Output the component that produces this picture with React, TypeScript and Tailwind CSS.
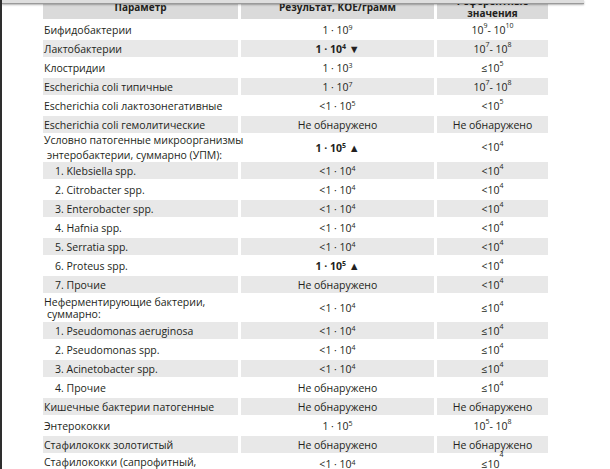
import type { ReactNode } from 'react';

type Row = {
  param: ReactNode;
  result: ReactNode;
  norm: ReactNode;
  gray?: boolean;
  sub?: boolean;
  tall?: string;
  top?: boolean;
};

// 10 with exponent
function P({ e }: { e: string }) {
  return (
    <>
      10<sup className="text-[7px]">{e}</sup>
    </>
  );
}

function Val({ lt, e }: { lt?: boolean; e: string }) {
  return (
    <span>
      {lt ? '<' : ''}1 · <P e={e} />
    </span>
  );
}

function Up({ e, down }: { e: string; down?: boolean }) {
  return (
    <span className="font-bold">
      1 · <P e={e} /> <span className="text-[11px]">{down ? '▼' : '▲'}</span>
    </span>
  );
}

const ND = 'Не обнаружено';

const rows: Row[] = [
  { param: 'Бифидобактерии', result: <Val e="9" />, norm: <><P e="9" /> - <P e="10" /></> },
  { param: 'Лактобактерии', result: <Up e="4" down />, norm: <><P e="7" /> - <P e="8" /></>, gray: true },
  { param: 'Клостридии', result: <Val e="3" />, norm: <>≤<P e="5" /></> },
  { param: 'Escherichia coli типичные', result: <Val e="7" />, norm: <><P e="7" /> - <P e="8" /></>, gray: true },
  { param: 'Escherichia coli лактозонегативные', result: <Val lt e="5" />, norm: <>&lt;<P e="5" /></> },
  { param: 'Escherichia coli гемолитические', result: ND, norm: ND, gray: true },
  {
    param: (
      <>
        Условно патогенные микроорганизмы
        <br />
        <span className="pl-[3px]">энтеробактерии, суммарно (УПМ):</span>
      </>
    ),
    result: <Up e="5" />,
    norm: <>&lt;<P e="4" /></>,
    tall: 'leading-[15px]',
  },
  { param: '1. Klebsiella spp.', result: <Val lt e="4" />, norm: <>&lt;<P e="4" /></>, gray: true, sub: true },
  { param: '2. Citrobacter spp.', result: <Val lt e="4" />, norm: <>&lt;<P e="4" /></>, sub: true },
  { param: '3. Enterobacter spp.', result: <Val lt e="4" />, norm: <>&lt;<P e="4" /></>, gray: true, sub: true },
  { param: '4. Hafnia spp.', result: <Val lt e="4" />, norm: <>&lt;<P e="4" /></>, sub: true },
  { param: '5. Serratia spp.', result: <Val lt e="4" />, norm: <>&lt;<P e="4" /></>, gray: true, sub: true },
  { param: '6. Proteus spp.', result: <Up e="5" />, norm: <>&lt;<P e="4" /></>, sub: true },
  { param: '7. Прочие', result: ND, norm: <>&lt;<P e="4" /></>, gray: true, sub: true },
  {
    param: (
      <>
        Неферментирующие бактерии,
        <br />
        <span className="pl-[3px]">суммарно:</span>
      </>
    ),
    result: <Val lt e="4" />,
    norm: <>≤<P e="4" /></>,
    tall: 'leading-[12px]',
  },
  { param: '1. Pseudomonas aeruginosa', result: <Val lt e="4" />, norm: <>≤<P e="4" /></>, gray: true, sub: true },
  { param: '2. Pseudomonas spp.', result: <Val lt e="4" />, norm: <>≤<P e="4" /></>, sub: true },
  { param: '3. Acinetobacter spp.', result: <Val lt e="4" />, norm: <>≤<P e="4" /></>, gray: true, sub: true },
  { param: '4. Прочие', result: ND, norm: <>≤<P e="4" /></>, sub: true },
  { param: 'Кишечные бактерии патогенные', result: ND, norm: ND, gray: true },
  { param: 'Энтерококки', result: <Val e="5" />, norm: <><P e="5" /> - <P e="8" /></> },
  { param: 'Стафилококк золотистый', result: ND, norm: ND, gray: true },
  {
    param: (
      <>
        Стафилококки (сапрофитный,
        <br />
        эпидермальный)
      </>
    ),
    result: <Val lt e="4" />,
    norm: <>≤<P e="4" /></>,
    tall: 'leading-[13px]',
    top: true,
  },
];

export default function App() {
  return (
    <div className="relative h-[469px] w-[610px] overflow-hidden border-l-[2px] border-[#2e2e2e] bg-white font-['Open_Sans',sans-serif] text-[10.5px] leading-[12px] text-[#231f20]">
      {/* page edge over the header */}
      <div className="absolute left-0 top-0 h-[4px] w-[582px] border-b border-[#9a9a9a] bg-[#dedede] shadow-[0_1px_2px_rgba(0,0,0,0.3)]" />

      <div className="-mt-[6px] ml-[41px] grid grid-cols-[195px_193px_111px] gap-x-[3px] gap-y-[2px]">
        <div className="flex h-[25px] items-center justify-center bg-[#dadada] text-[10px] font-bold">Параметр</div>
        <div className="flex h-[25px] items-center justify-center bg-[#dadada] text-[10px] font-bold">Результат, КОЕ/грамм</div>
        <div className="flex h-[25px] items-center justify-center bg-[#dadada] text-center text-[10px] font-bold">
          Референтные
          <br />
          значения
        </div>

        {rows.map((r, i) => {
          const bg = r.gray ? 'bg-[#e8e8e8]' : '';
          const h = r.tall ? `h-[25px] ${r.tall}` : 'h-[17px]';
          const al = r.top ? 'items-start pt-[3px]' : 'items-center';
          return (
            <div key={i} className="contents">
              <div className={`flex ${h} ${r.top ? 'items-start pt-[1px]' : 'items-center'} ${bg} ${r.sub ? 'pl-[12px]' : 'pl-[1px]'} whitespace-nowrap`}>
                <div>{r.param}</div>
              </div>
              <div className={`flex ${h} ${al} justify-center ${bg} whitespace-nowrap`}>{r.result}</div>
              <div className={`flex ${h} ${al} justify-center ${bg} whitespace-nowrap`}>{r.norm}</div>
            </div>
          );
        })}
      </div>
    </div>
  );
}
